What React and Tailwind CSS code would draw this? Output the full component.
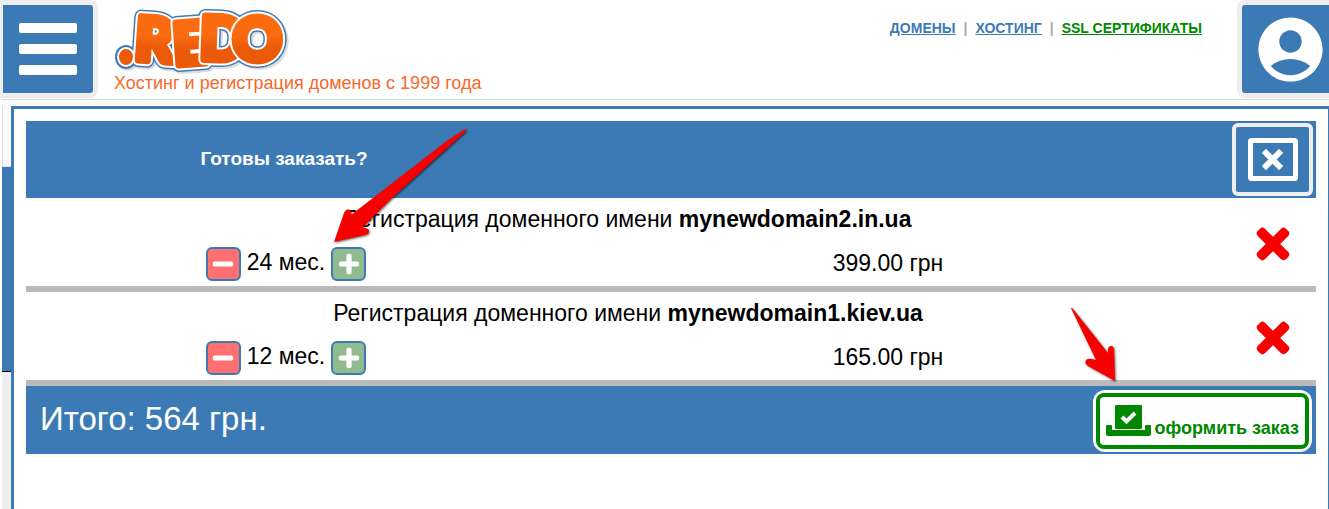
import React, { useState } from "react";
import { FaMinus, FaPlus, FaTimes } from "react-icons/fa";
import { MdAccountCircle } from "react-icons/md";

const ITEMS = [
  { id: 1, domain: "mynewdomain2.in.ua", months: 24, price: 399 },
  { id: 2, domain: "mynewdomain1.kiev.ua", months: 12, price: 165 },
];

const LETTERS = [
  { char: "R", x: 21, y: 57, size: 60, rotate: 4 },
  { char: "E", x: 59, y: 60, size: 58, rotate: -4 },
  { char: "D", x: 86, y: 56, size: 60, rotate: 2 },
  { char: "O", x: 119, y: 57, size: 60, rotate: 0 },
];

function LogoLetter({ letter, className, strokeWidth }) {
  return (
    <text
      x={letter.x}
      y={letter.y}
      fontSize={letter.size}
      transform={`rotate(${letter.rotate} ${letter.x + 18} ${letter.y - 20})`}
      className={className}
      strokeWidth={strokeWidth}
    >
      {letter.char}
    </text>
  );
}

function Logo() {
  return (
    <svg width="172" height="70" viewBox="0 0 172 70" strokeLinejoin="round" className="block overflow-visible font-['Lato'] font-black" role="img" aria-label=".REDO">
      <defs>
        <linearGradient id="logo-fill" gradientUnits="userSpaceOnUse" x1="0" y1="8" x2="0" y2="66">
          <stop offset="0.4" stopColor="#fb6b10" />
          <stop offset="0.62" stopColor="#ea5a08" />
        </linearGradient>
      </defs>
      <g transform="translate(2 2)">
        <ellipse cx="12" cy="53" rx="11" ry="12" className="fill-[#dddddd]" />
        {LETTERS.map((l) => (
          <LogoLetter key={l.char} letter={l} className="fill-[#dddddd] stroke-[#dddddd]" strokeWidth="14" />
        ))}
      </g>
      <ellipse cx="12" cy="53" rx="11" ry="12" className="fill-[#3c7ab6]" />
      {LETTERS.map((l) => (
        <LogoLetter key={l.char} letter={l} className="fill-[#3c7ab6] stroke-[#3c7ab6]" strokeWidth="14" />
      ))}
      <ellipse cx="12" cy="53" rx="8" ry="9" className="fill-[url(#logo-fill)] stroke-white" strokeWidth="2" />
      {LETTERS.map((l) => (
        <g key={l.char}>
          <LogoLetter letter={l} className="fill-white stroke-white" strokeWidth="11" />
          <LogoLetter letter={l} className="fill-[url(#logo-fill)] stroke-[url(#logo-fill)]" strokeWidth="7" />
        </g>
      ))}
    </svg>
  );
}

function Header() {
  return (
    <header className="flex h-[99px] items-start">
      <button
        aria-label="Меню"
        className="flex h-[98px] w-[98px] shrink-0 flex-col items-center justify-center gap-[11px] rounded-r-lg border-y-5 border-r-5 border-l-3 border-[#eeeeee] bg-[#3c7ab6]"
      >
        <span className="h-[10px] w-[58px] rounded-xs bg-white" />
        <span className="h-[10px] w-[58px] rounded-xs bg-white" />
        <span className="h-[10px] w-[58px] rounded-xs bg-white" />
      </button>
      <div className="ml-4 pt-1">
        <Logo />
        <p className="text-[18px] leading-[18px] text-[#f9682a]">Хостинг и регистрация доменов с 1999 года</p>
      </div>
      <nav className="mt-[18px] mr-[35px] ml-auto flex items-center gap-2 text-[14px] leading-5 font-bold text-[#3c7ab6]">
        <a href="#domains" className="underline">ДОМЕНЫ</a>
        <span className="text-[#aaaaaa]">|</span>
        <a href="#hosting" className="underline">ХОСТИНГ</a>
        <span className="text-[#aaaaaa]">|</span>
        <a href="#ssl" className="text-[#008800] underline">SSL СЕРТИФИКАТЫ</a>
      </nav>
      <button
        aria-label="Личный кабинет"
        className="flex h-[98px] w-[92px] shrink-0 items-center justify-end rounded-l-lg border-y-5 border-l-5 border-[#eeeeee] bg-[#3c7ab6]"
      >
        <MdAccountCircle size={77} className="text-white" />
      </button>
    </header>
  );
}

function CloseIcon() {
  return (
    <svg width="50" height="43" viewBox="0 0 50 43" fill="none" stroke="white" strokeLinejoin="round">
      <rect x="2.5" y="2.5" width="45" height="38" rx="1" strokeWidth="5" />
      <path d="M18 15L31 28M31 15L18 28" strokeWidth="6" strokeLinecap="square" />
    </svg>
  );
}

function OrderIcon() {
  return (
    <svg width="45" height="32" viewBox="0 0 45 32" className="shrink-0 fill-[#008800]">
      <rect x="9" y="0" width="27" height="24" rx="1" />
      <path d="M1 20H5Q6 20 6 21V25H39V21Q39 20 40 20H44Q45 20 45 21V29Q45 31 43 31H2Q0 31 0 29V21Q0 20 1 20Z" />
      <path d="M16 12L20.500 16.500L29 8" fill="none" stroke="white" strokeWidth="4" />
    </svg>
  );
}

function StepButton({ label, className, onClick, children }) {
  return (
    <button
      aria-label={label}
      onClick={onClick}
      className={`flex h-[34px] w-[35px] items-center justify-center rounded-md border-2 border-[#3c7ab6] text-white ${className}`}
    >
      {children}
    </button>
  );
}

function CartItem({ item, onStep, onRemove }) {
  return (
    <>
      <tr className="h-[42px]">
        <td colSpan={2} className="p-0 text-center align-middle">
          Регистрация доменного имени <b>{item.domain}</b>
        </td>
        <td rowSpan={2} className="border-b-6 border-[#bbbbbb] p-0 pt-1">
          <button aria-label={`Удалить ${item.domain}`} onClick={onRemove} className="mx-auto block text-[#f80000]">
            <FaTimes size={44} className="overflow-visible stroke-current" strokeWidth={24} />
          </button>
        </td>
      </tr>
      <tr className="h-[52px]">
        <td className="border-b-6 border-[#bbbbbb] p-0">
          <div className="flex items-start justify-center gap-[6px] pt-[7px] pb-[5px] pl-1">
            <StepButton label="Меньше" className="bg-[#ff7171]" onClick={() => onStep(-12)}>
              <FaMinus size={22} className="stroke-current" strokeWidth={24} />
            </StepButton>
            <span className="leading-[30px]">{item.months} мес.</span>
            <StepButton label="Больше" className="bg-[#8fbb8f]" onClick={() => onStep(12)}>
              <FaPlus size={22} className="stroke-current" strokeWidth={24} />
            </StepButton>
          </div>
        </td>
        <td className="border-b-6 border-[#bbbbbb] p-0 pl-1 text-center">{item.price.toFixed(2)} грн</td>
      </tr>
    </>
  );
}

function Cart() {
  const [items, setItems] = useState(ITEMS);
  const total = items.reduce((sum, i) => sum + i.price, 0);

  const step = (id, delta) => {
    setItems(items.map((i) => {
      const months = Math.max(12, i.months + delta);
      return i.id === id ? { ...i, months, price: Math.round((i.price / i.months) * months) } : i;
    }));
  };

  return (
    <table className="w-full table-fixed border-separate border-spacing-0 text-[23px] leading-7 text-black">
      <colgroup>
        <col className="w-[40%]" />
        <col />
        <col className="w-[86px]" />
      </colgroup>
      <thead className="bg-[#3c7ab6] text-white">
        <tr className="h-[77px]">
          <th className="p-0 pb-[2px] text-center text-[19px] font-bold">Готовы заказать?</th>
          <td />
          <td className="p-0">
            <button
              aria-label="Закрыть"
              className="ml-[2px] flex h-[73px] w-[81px] items-center justify-center rounded-md border-4 border-[#eeeeee]"
            >
              <CloseIcon />
            </button>
          </td>
        </tr>
      </thead>
      <tbody>
        {items.map((item) => (
          <CartItem
            key={item.id}
            item={item}
            onStep={(delta) => step(item.id, delta)}
            onRemove={() => setItems(items.filter((i) => i.id !== item.id))}
          />
        ))}
      </tbody>
      <tfoot className="bg-[#3c7ab6] text-white">
        <tr className="h-[68px]">
          <td colSpan={3} className="p-0">
            <div className="flex items-center justify-between pt-[2px] pr-1 pl-[14px]">
              <span className="pb-1 text-[33px] leading-10">Итого: {total} грн.</span>
              <button className="rounded-xl bg-white p-[3px]">
                <span className="flex h-14 items-end gap-1 rounded-lg border-4 border-[#008800] px-[6px] pb-2 text-[18px] leading-[18px] font-bold text-[#008800]">
                  <OrderIcon />
                  оформить заказ
                </span>
              </button>
            </div>
          </td>
        </tr>
      </tfoot>
    </table>
  );
}

// pointers laid over the page
function Pointers() {
  return (
    <>
      <svg className="pointer-events-none absolute top-[124px] left-[328px] fill-[#f80000] drop-shadow-[1px_1px_1px_rgba(0,0,0,0.6)]" width="144" height="124" viewBox="0 0 144 124">
        <path d="M137 5Q139 5 137 8L64 74L34 104H37Q41 105 41 107Q41 110 37 111L6 118L16 89Q18 84 22 86Q24 87 23 91L45 74L120 16Z" />
      </svg>
      <svg className="pointer-events-none absolute top-[304px] left-[1068px] fill-[#f80000] drop-shadow-[1px_1px_1px_rgba(0,0,0,0.6)]" width="52" height="82" viewBox="0 0 52 82">
        <path d="M3 4Q3 3 5 5L40 49V46Q40 42 43 42Q46 42 46 46L47 77L20 62Q16 59 18 56Q20 54 24 55L28 56Z" />
      </svg>
    </>
  );
}

export default function App() {
  return (
    <div className="relative flex min-h-screen flex-col overflow-hidden bg-white font-['Liberation_Sans',sans-serif]">
      <Header />
      <div className="ml-[2px] flex grow flex-col border-t border-[#dddddd] bg-[#fafafa] pt-[6px]">
        <div className="flex grow">
          <div className="flex w-[9px] shrink-0 flex-col">
            <div className="h-[61px] border-b border-l border-[#dddddd]" />
            <div className="h-[205px] border-b border-black bg-[#3c7ab6]" />
            <div className="grow bg-[#eeeeee]" />
          </div>
          <main className="grow border-t-3 border-r border-l-3 border-[#3c7ab6] bg-white p-3">
            <Cart />
          </main>
        </div>
      </div>
      <Pointers />
    </div>
  );
}
